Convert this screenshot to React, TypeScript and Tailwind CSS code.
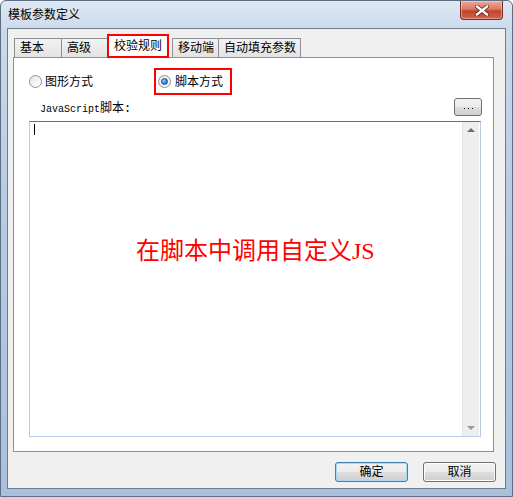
import React from 'react'

const ui = "font-['Liberation_Sans','Noto_Sans_CJK_SC',sans-serif]"

// Win7 style tab
const Tab = ({ label, w, ml = '' }: { label: string; w: string; ml?: string }) => (
  <div
    className={`${w} ${ml} h-[19px] -ml-px first:ml-0 border border-b-0 border-[#8c8f96] bg-gradient-to-b from-[#f3f3f3] to-[#e3e3e3] flex items-center pl-[5px] text-[12px] leading-none text-black`}
  >
    {label}
  </div>
)

const Radio = ({ checked }: { checked?: boolean }) => (
  <span className="w-[13px] h-[13px] rounded-full border border-[#8e8f8f] bg-gradient-to-br from-[#e8e8e8] to-[#ffffff] flex items-center justify-center shrink-0">
    {checked && (
      <span className="w-[7px] h-[7px] rounded-full bg-[radial-gradient(circle_at_35%_35%,#9fd3f7,#1f6fc0_70%)] border border-[#1e4f8a]" />
    )}
  </span>
)

const Button = ({ label, focused }: { label: string; focused?: boolean }) => (
  <button
    className={`w-[73px] h-[20px] rounded-[3px] border ${
      focused ? 'border-[#3c7fb1] shadow-[inset_0_0_0_1px_#a6dbf7]' : 'border-[#707070] shadow-[inset_0_0_0_1px_#fcfcfc]'
    } bg-[linear-gradient(#f2f2f2_0%,#ebebeb_50%,#dddddd_51%,#cfcfcf_100%)] text-[12px] leading-none text-black flex items-center justify-center`}
  >
    {label}
  </button>
)

export default function App() {
  return (
    <div
      className={`${ui} w-[513px] h-[497px] flex flex-col rounded-t-[6px] border border-[#5d6d83] bg-[linear-gradient(#dfe8f3_0px,#cbdaeb_30px,#b7cbe3_200px,#a9c0dc_497px)] overflow-hidden`}
    >
      {/* title bar */}
      <div className="h-[27px] flex justify-between shrink-0">
        <div className="pl-[7px] pt-[8px] text-[12px] leading-none text-black">模板参数定义</div>
        <div className="mr-[9px] w-[43px] h-[19px] rounded-b-[4px] border border-t-0 border-[#7a2a1e] bg-[linear-gradient(#e9a99b_0%,#d97b63_45%,#c2432a_55%,#d4654b_100%)] flex items-center justify-center shadow-[inset_0_0_0_1px_rgba(255,255,255,0.35)]">
          <svg width="14" height="11" viewBox="0 0 14 11">
            <path d="M2 1.5 L12 9.5 M12 1.5 L2 9.5" stroke="#5a1a10" strokeWidth="4" strokeLinecap="square" />
            <path d="M2 1.5 L12 9.5 M12 1.5 L2 9.5" stroke="#ffffff" strokeWidth="2.4" strokeLinecap="square" />
          </svg>
        </div>
      </div>

      {/* client area */}
      <div className="flex-1 mx-[6px] mb-[7px] border border-[#6f7c8e] bg-[#f0f0f0] flex flex-col">
        {/* tabs */}
        <div className="mt-[5px] ml-[6px] h-[23px] flex items-end">
          <Tab label="基本" w="w-[48px]" ml="ml-px" />
          <Tab label="高级" w="w-[47px]" />
          <div className="w-[62px] h-[24px] -ml-px -mb-px z-10 border-2 border-[#ff0000] bg-white flex items-center justify-center text-[12px] leading-none text-black">
            校验规则
          </div>
          <Tab label="移动端" w="w-[47px]" ml="ml-[3px]" />
          <Tab label="自动填充参数" w="w-[83px]" />
        </div>

        {/* tab panel */}
        <div className="ml-[5px] w-[481px] h-[395px] border border-[#8c8f96] bg-white flex flex-col">
          <div className="mt-[10px] h-[27px] flex items-center text-[12px] leading-none text-black">
            <div className="ml-[15px] flex items-center gap-[3px]">
              <Radio />
              <span>图形方式</span>
            </div>
            <div className="ml-[61px] h-[27px] w-[78px] border-2 border-[#ff0000] flex items-center gap-[4px] pl-[2px]">
              <Radio checked />
              <span>脚本方式</span>
            </div>
          </div>

          <div className="mt-[3px] h-[18px] flex items-end">
            <span className="ml-[26px] pb-[1px] text-[10px] leading-none text-black font-['Liberation_Mono','Noto_Sans_CJK_SC',monospace]">
              JavaScript<span className="text-[12px]">脚本:</span>
            </span>
            <div className="ml-auto mr-[11px] w-[28px] h-[18px] rounded-[3px] border border-[#707070] bg-[linear-gradient(#f2f2f2_0%,#ebebeb_50%,#dddddd_51%,#cfcfcf_100%)] flex items-center justify-center gap-[3px] pt-[2px]">
              <span className="w-px h-px bg-black" />
              <span className="w-px h-px bg-black" />
              <span className="w-px h-px bg-black" />
            </div>
          </div>

          {/* textarea */}
          <div className="relative mt-[5px] ml-[15px] w-[452px] h-[316px] border border-[#b6cde6] border-t-[#3d7bad] bg-white flex">
            <div className="flex-1 pl-[4px] pt-[2px]">
              <div className="w-px h-[11px] bg-black" />
            </div>
            <div className="w-[17px] mr-px bg-[#eeeeee] border-l border-[#e4e4e4] flex flex-col justify-between items-center py-[6px]">
              <svg width="8" height="4" viewBox="0 0 8 4">
                <path d="M0 4 L4 0 L8 4 Z" fill="#6e6e6e" />
              </svg>
              <svg width="8" height="4" viewBox="0 0 8 4">
                <path d="M0 0 L4 4 L8 0 Z" fill="#9a9a9a" />
              </svg>
            </div>
            <div className="absolute left-[106px] top-[117px] text-[24px] leading-none text-[#ff0000] font-['Liberation_Serif','Noto_Sans_CJK_SC',serif] whitespace-nowrap">
              在脚本中调用自定义JS
            </div>
          </div>
        </div>

        {/* buttons */}
        <div className="mt-[10px] flex justify-end gap-[15px] mr-[9px]">
          <Button label="确定" focused />
          <Button label="取消" />
        </div>
      </div>
    </div>
  )
}
